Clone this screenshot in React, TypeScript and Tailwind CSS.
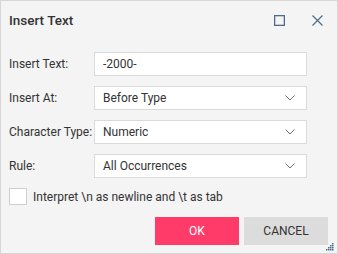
import { FC } from 'react'

const font = { fontFamily: 'Roboto, "Open Sans", sans-serif' }

const Chevron: FC = () => (
  <svg width="10" height="6" viewBox="0 0 10 6" fill="none" stroke="#707070" strokeWidth="1">
    <path d="M0.5 0.5 L5 5 L9.5 0.5" />
  </svg>
)

interface RowProps {
  label: string,
  value: string,
  select?: boolean
}

const Row: FC<RowProps> = ({label, value, select}) => (
  <div className="flex items-center h-[24px]">
    <div className="w-[85px] whitespace-nowrap text-[12px] text-[#333333]">{label}</div>
    <div className="w-[213px] h-[24px] bg-white border border-[#dadada] flex items-center justify-between pl-[8px] pr-[11px] text-[12px] text-[#333333]">
      <span>{value}</span>
      {select && <Chevron/>}
    </div>
  </div>
)

export default function App() {
  return (
    <div className="w-[338px] h-[254px] border border-[#d6d6d6] bg-[#f4f4f4] relative flex flex-col" style={font}>
      <div className="flex items-center h-[38px] pl-[8px]">
        <div className="text-[13.5px] font-medium text-[#333333] flex-1">Insert Text</div>
        <svg width="11" height="11" viewBox="0 0 11 11" fill="none" stroke="#4d6b8a" strokeWidth="1.3" className="mr-[27px]">
          <rect x="0.65" y="0.65" width="9.7" height="9.7" />
        </svg>
        <svg width="11" height="11" viewBox="0 0 11 11" fill="none" stroke="#4d6b8a" strokeWidth="1.2" className="mr-[14px]">
          <path d="M0.5 0.5 L10.5 10.5 M10.5 0.5 L0.5 10.5" />
        </svg>
      </div>
      <div className="flex flex-col gap-[10px] pl-[8px] pt-[13px]">
        <Row label="Insert Text:" value="-2000-"/>
        <Row label="Insert At:" value="Before Type" select/>
        <Row label="Character Type:" value="Numeric" select/>
        <Row label="Rule:" value="All Occurrences" select/>
        <div className="flex items-center h-[17px]">
          <div className="w-[18px] h-[17px] bg-white border border-[#cfcfcf]"></div>
          <span className="ml-[6px] text-[12px] text-[#333333]">Interpret \n as newline and \t as tab</span>
        </div>
      </div>
      <div className="flex justify-end gap-[5px] pr-[9px] mt-[12px]">
        <button className="w-[84px] h-[28px] bg-[#ff3b69] text-white text-[12px]">OK</button>
        <button className="w-[84px] h-[28px] bg-[#dcdcdc] text-[#333333] text-[12px]">CANCEL</button>
      </div>
      <svg width="8" height="8" viewBox="0 0 8 8" className="absolute right-[3px] bottom-[2px]" fill="#4d6b8a">
        <rect x="6" y="0" width="1.5" height="1.5"/>
        <rect x="4" y="2" width="1.5" height="1.5"/>
        <rect x="6" y="2" width="1.5" height="1.5"/>
        <rect x="2" y="4" width="1.5" height="1.5"/>
        <rect x="4" y="4" width="1.5" height="1.5"/>
        <rect x="6" y="4" width="1.5" height="1.5"/>
        <rect x="0" y="6" width="1.5" height="1.5"/>
        <rect x="2" y="6" width="1.5" height="1.5"/>
        <rect x="4" y="6" width="1.5" height="1.5"/>
        <rect x="6" y="6" width="1.5" height="1.5"/>
      </svg>
    </div>
  )
}
